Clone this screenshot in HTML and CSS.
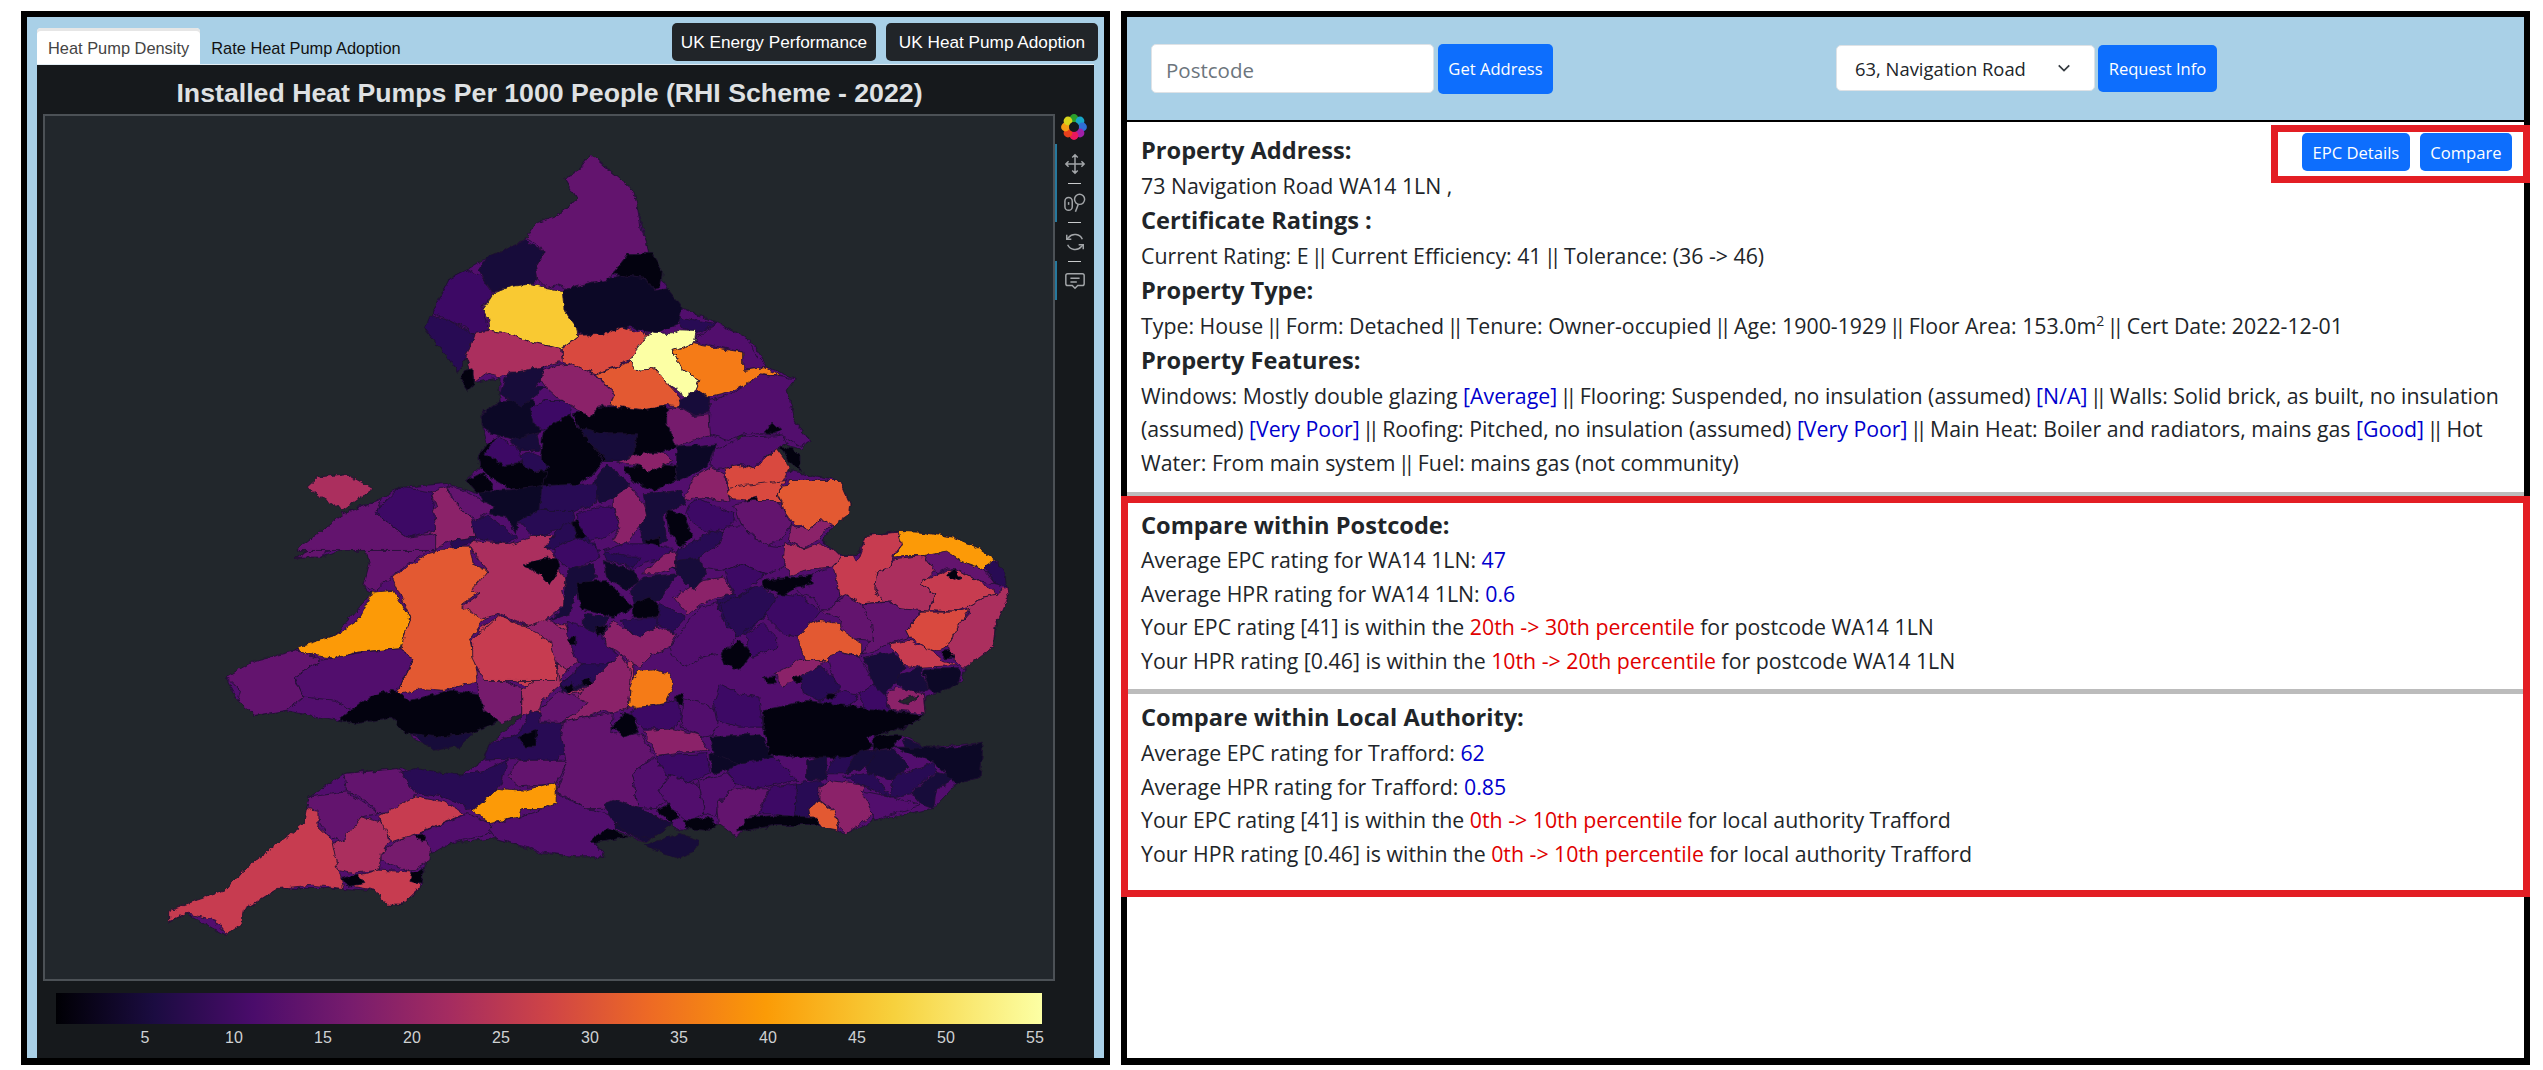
FILE: index.html
```html
<!DOCTYPE html>
<html>

<head>
  <meta name="viewport" content="width=device-width, initial-scale=1.0">
  <title>UK Heat Pump Dashboard</title>
  <link rel="stylesheet" href="styles.css">
</head>

<body>
  <div id="mapFrame">
    <div class="tabBar">
      <div class="tab active">Heat Pump Density</div>
      <div class="tab">Rate Heat Pump Adoption</div>
      <div class="tabButtons">
        <button class="darkBtn energy" type="button">UK Energy Performance</button>
        <button class="darkBtn adopt" type="button">UK Heat Pump Adoption</button>
      </div>
    </div>
    <div id="chart">
      <div class="chartTitle">Installed Heat Pumps Per 1000 People (RHI Scheme - 2022)</div>
      <div class="plotRow">
        <div class="plot">
          <svg class="mapSvg" viewBox="45 116 1008 862">
            <defs>
              <filter id="rough" x="0" y="0" width="100%" height="100%" color-interpolation-filters="sRGB">
                <feTurbulence type="fractalNoise" baseFrequency="0.14" numOctaves="3" seed="4" result="n"/>
                <feDisplacementMap in="SourceGraphic" in2="n" scale="6" xChannelSelector="R" yChannelSelector="G"/>
              </filter>
            </defs>
            <g filter="url(#rough)">
              <!-- coastline underlay so gaps between districts stay purple -->
              <polygon class="c5" points="591,154 618,177 638,207 649,254 668,290 682,307 718,323 750,340 768,367 796,378 787,390 796,423 810,440 800,448 733,433 745,445 790,470 840,480 850,503 848,515 833,525 822,540 840,554 857,555 867,535 898,531 953,537 997,560 1007,587 1008,597 995,627 993,647 965,667 962,680 937,693 925,697 923,710 923,715 907,727 873,735 902,735 927,747 983,742 980,777 957,783 933,808 873,820 847,833 820,825 773,825 737,832 717,823 680,830 672,825 674,823 645,842 616,830 593,840 605,857 542,853 496,838 450,843 427,853 421,887 401,905 375,890 344,888 278,888 243,910 226,935 186,913 169,922 169,910 226,890 304,823 309,797 344,773 398,768 461,775 484,760 490,743 530,710 505,718 467,733 438,750 413,737 393,717 338,720 286,710 255,715 238,700 226,677 298,648 335,635 372,592 364,587 370,563 364,542 321,557 295,557 329,540 298,550 343,513 380,498 400,487 446,483 478,493 467,480 480,467 478,457 487,443 483,427 483,413 500,400 500,377 475,382 466,357 457,372 445,353 425,328 432,313 450,278 468,269 488,257 507,248 527,238 557,215 577,200 564,178 580,168"/>

              <!-- wales and south west -->
              <g transform="translate(140 520) scale(.574 .333)">
                <polygon class="c6" points="270,110 330,60 400,60 420,0 520,0 510,60 500,90 440,165 410,210 390,195 400,130 390,65 340,80 315,110"/>
                <polygon class="c14" points="275,380 340,345 380,300 405,215 440,210 470,290 455,385 380,395 345,415 280,400"/>
                <polygon class="c12" points="440,170 500,100 540,80 575,80 580,130 605,150 590,215 560,255 600,295 575,360 590,480 530,510 490,505 445,525 475,420 455,385 470,290"/>
                <polygon class="c6" points="150,470 200,420 275,390 315,420 270,470 285,530 255,570 200,585 170,540 175,510"/>
                <polygon class="c5" points="270,470 315,420 390,395 455,385 475,420 445,525 400,535 370,570 340,540 285,530"/>
                <polygon class="c0" points="345,600 400,530 440,510 470,540 540,510 590,520 600,570 635,595 610,615 570,640 520,660 460,640 440,590 380,610"/>
                <polygon class="c2" points="475,640 520,650 580,640 555,680 510,690"/>
                <polygon class="c10" points="580,410 590,330 625,285 660,310 720,330 725,430 680,505 620,450"/>
                <polygon class="c7" points="585,450 620,470 665,505 665,580 630,610 600,570 590,520"/>
                <polygon class="c9" points="665,590 665,510 725,430 735,490 700,540 695,570"/>
                <polygon class="c9" points="720,330 675,310 740,310 760,420 730,480"/>
                <polygon class="c9" points="690,575 720,530 770,505 810,470 860,410 860,520 840,570 790,570 745,600"/>
                <polygon class="c7" points="700,560 730,530 780,510 760,560 720,600"/>
                <polygon class="c2" points="730,490 770,440 830,420 815,470 770,500 740,520"/>
                <polygon class="c13" points="855,540 865,460 900,445 930,490 915,555 860,565"/>
                <polygon class="c3" points="600,720 610,670 660,640 680,570 740,610 745,690 720,730 650,715"/>
                <polygon class="c0" points="660,650 690,630 690,680 670,680"/>
                <polygon class="c6" points="640,770 660,720 745,720 725,790 660,800"/>
                <polygon class="c3" points="430,770 480,745 560,765 600,750 640,720 630,790 610,830 580,870 530,830 480,820"/>
                <polygon class="c6" points="355,760 450,745 480,820 470,875 415,880 400,850 360,810"/>
                <polygon class="c6" points="295,830 360,815 400,860 415,880 385,890 355,970 325,940 310,900 290,870"/>
                <polygon class="c10" points="50,1170 100,1140 150,1110 180,1050 240,970 285,910 290,865 310,870 310,920 335,960 345,1040 355,1105 300,1095 240,1105 180,1170 175,1215 150,1245 130,1200 80,1180 50,1205"/>
                <polygon class="c9" points="335,970 355,960 385,890 430,910 435,965 420,1010 415,1050 370,1060 345,1050"/>
                <polygon class="c7" points="420,1000 470,940 510,960 505,1020 470,1055 420,1020"/>
                <polygon class="c10" points="415,890 480,830 530,845 565,880 490,935 440,965"/>
                <polygon class="c10" points="370,1070 415,1050 470,1055 490,1100 455,1155 430,1155 410,1110 375,1100"/>
                <polygon class="c0" points="350,1075 380,1065 390,1090 360,1100"/>
                <polygon class="c0" points="475,1060 495,1040 490,1090 470,1080"/>
                <polygon class="c0" points="480,945 500,935 505,960 490,965"/>
                <polygon class="c5" points="490,935 570,880 610,910 620,935 540,970 510,1000"/>
                <polygon class="c5" points="610,930 620,910 660,890 705,865 725,815 770,860 830,890 830,925 790,960 810,1010 760,1010 700,995 620,955"/>
                <polygon class="c14" points="580,870 625,805 670,810 725,785 725,850 700,865 665,865 660,890 610,910"/>
                <polygon class="c0" points="785,960 815,925 850,950 790,970"/>
                <polygon class="c2" points="800,845 860,860 930,910 880,965 830,925 830,880"/>
                <polygon class="c2" points="880,975 940,940 975,960 965,995 935,1015"/>
              </g>

              <!-- midlands and north west -->
              <g transform="translate(400 400) scale(.3333)">
                <polygon class="c1" points="250,40 300,0 400,0 400,60 420,90 350,120 280,100 250,80"/>
                <polygon class="c4" points="390,20 430,0 520,0 510,40 430,90 400,70"/>
                <polygon class="c0" points="590,20 800,15 810,90 830,110 830,140 700,180 610,180 540,90 520,40"/>
                <polygon class="c0" points="430,90 510,40 540,90 610,180 580,220 520,260 430,260 420,180"/>
                <polygon class="c2" points="540,80 620,100 710,100 700,180 620,180 570,130"/>
                <polygon class="c2" points="330,120 410,95 420,150 360,150"/>
                <polygon class="c0" points="235,170 260,130 290,110 255,160 280,175 310,195 350,190 370,185 400,215 440,210 430,260 330,265 270,230 240,200"/>
                <polygon class="c4" points="255,160 290,105 330,130 360,150 370,180 350,190 310,195 280,175"/>
                <polygon class="c3" points="360,165 400,155 450,200 400,215 370,190"/>
                <polygon class="c0" points="200,240 250,215 285,265 235,280"/>
                <polygon class="c2" points="590,230 620,190 690,250 650,290 600,310 580,270"/>
                <polygon class="c0" points="670,200 720,195 745,215 790,190 830,195 830,240 760,270 700,245"/>
                <polygon class="c8" points="650,185 730,155 790,155 815,180 745,215 720,195"/>
                <polygon class="c1" points="830,140 950,130 920,200 860,230 830,240 830,195"/>
                <polygon class="c5" points="945,150 1030,110 1150,105 1160,130 1090,170 1060,205 1030,190 950,205 930,190"/>
                <polygon class="c11" points="975,200 1030,195 1060,205 1130,145 1170,200 1140,260 1140,310 1080,290 990,295"/>
                <polygon class="c0" points="1140,140 1180,145 1200,165 1200,210 1165,180"/>
                <polygon class="c8" points="850,300 880,230 935,200 975,225 990,305 930,295 880,290"/>
                <polygon class="c1" points="235,275 280,270 330,268 430,255 430,330 355,360 350,400 320,350 270,340"/>
                <polygon class="c3" points="425,255 590,250 590,310 530,330 470,360 420,330"/>
                <polygon class="c3" points="355,360 420,330 520,330 525,360 470,390 400,410"/>
                <polygon class="c8" points="95,275 140,255 150,290 215,355 225,410 150,420 105,445 80,345 110,320"/>
                <polygon class="c6" points="140,255 190,270 285,320 230,360 205,345 160,300"/>
                <polygon class="c3" points="215,365 265,345 310,380 350,410 320,430 225,410"/>
                <polygon class="c3" points="150,420 225,410 200,435 160,445"/>
                <polygon class="c9" points="210,440 215,420 330,430 400,405 460,405 440,440 470,470 480,510 505,545 485,570 495,610 450,650 400,680 350,660 300,640 245,655 185,620 240,580 215,570 265,510 240,480"/>
                <polygon class="c0" points="370,495 430,475 470,470 480,500 450,550 420,520"/>
                <polygon class="c10" points="215,720 300,645 350,670 430,690 470,760 470,840 250,840 215,770"/>
                <polygon class="c8" points="375,680 440,655 500,690 535,780 500,810 470,790 450,720"/>
                <polygon class="c3" points="435,440 490,370 520,370 560,410 600,450 560,440 470,445"/>
                <polygon class="c4" points="530,340 590,320 640,320 660,380 620,410 570,420 530,380"/>
                <polygon class="c0" points="515,365 535,360 560,410 530,410"/>
                <polygon class="c8" points="640,290 690,255 730,310 745,350 700,400 670,440 640,420 660,380 640,320"/>
                <polygon class="c4" points="465,440 530,410 590,440 600,470 560,490 510,510 465,470"/>
                <polygon class="c2" points="500,510 580,490 590,530 520,590 510,640 450,660 490,620"/>
                <polygon class="c1" points="610,480 700,510 720,540 680,570 620,530"/>
                <polygon class="c0" points="530,550 620,540 650,570 700,620 640,650 540,620"/>
                <polygon class="c2" points="730,530 830,520 780,600 700,610 690,570"/>
                <polygon class="c0" points="700,610 750,590 780,620 770,650 700,650"/>
                <polygon class="c2" points="550,640 630,650 590,700 550,680"/>
                <polygon class="c3" points="660,660 770,650 775,680 720,710 680,690"/>
                <polygon class="c3" points="780,610 860,650 820,695 770,670"/>
                <polygon class="c4" points="500,665 550,680 600,700 640,750 660,770 620,790 600,800 550,790 530,780 500,700"/>
                <polygon class="c0" points="500,715 530,710 530,735 510,735"/>
                <polygon class="c0" points="585,680 625,670 610,700 590,705"/>
                <polygon class="c8" points="610,700 640,660 680,690 720,710 770,680 830,700 810,740 760,760 720,800 700,790 650,750 620,735"/>
                <polygon class="c8" points="820,590 910,540 970,530 1000,580 950,590 900,610 860,640"/>
                <polygon class="c5" points="810,740 900,620 950,610 1010,710 970,760 900,770 860,800 820,770"/>
                <polygon class="c3" points="950,600 1040,560 1085,570 1130,610 1090,650 1040,700 980,680"/>
                <polygon class="c4" points="1040,700 1090,670 1130,710 1130,740 1060,770 1040,740"/>
                <polygon class="c0" points="960,760 1020,720 1055,760 1020,810 975,790"/>
                <polygon class="c2" points="820,480 905,470 920,520 880,570 840,530 810,490"/>
                <polygon class="c3" points="830,450 940,390 975,400 960,430 905,470 830,480"/>
                <polygon class="c4" points="870,310 900,295 1000,340 1005,360 980,385 920,395 880,370 860,340"/>
                <polygon class="c5" points="980,380 1030,375 1060,410 1110,435 1160,440 1150,500 1100,520 1020,490 975,510 905,500 900,470 960,430"/>
                <polygon class="c4" points="975,510 1020,490 1100,520 1050,560 1010,590 985,550"/>
                <polygon class="c2" points="730,280 840,270 860,310 790,340 800,420 760,440 730,430 720,380 740,350"/>
                <polygon class="c0" points="800,330 850,340 880,410 840,440 810,400"/>
                <polygon class="c0" points="735,420 780,410 785,440 755,450"/>
                <polygon class="c4" points="670,430 740,430 790,440 820,440 800,470 730,490 700,510 640,470 610,450"/>
                <polygon class="c3" points="610,450 680,470 720,470 700,500 620,480"/>
                <polygon class="c8" points="725,520 780,470 825,450 830,500 770,520"/>
              </g>

              <!-- east -->
              <g transform="translate(720 480) scale(.3333)">
                <polygon class="c12" points="175,40 210,0 360,0 390,70 385,105 340,135 305,118 265,150 215,120 190,85 185,60"/>
                <polygon class="c11" points="20,40 30,20 200,0 175,40 185,70 100,60 40,55"/>
                <polygon class="c0" points="75,60 110,50 115,65 95,78"/>
                <polygon class="c6" points="40,75 100,60 160,60 190,85 215,130 185,175 140,195 110,175 60,130"/>
                <polygon class="c8" points="215,130 265,150 305,118 335,130 300,170 255,205 205,180"/>
                <polygon class="c9" points="195,185 255,205 300,190 345,210 365,230 335,260 270,265 210,285 190,240"/>
                <polygon class="c10" points="337,265 365,225 400,225 410,245 440,165 535,155 545,190 515,230 510,260 470,275 465,320 485,365 420,370 395,350 360,345"/>
                <polygon class="c6" points="610,225 680,212 720,240 790,265 825,310 770,300 720,270 680,265 650,280"/>
                <polygon class="c14" points="520,230 545,195 535,153 600,155 700,170 770,200 830,240 790,265 720,240 680,215 610,225 550,225"/>
                <polygon class="c3" points="795,260 825,240 855,280 860,320 825,310"/>
                <polygon class="c9" points="470,275 510,260 520,235 610,225 645,270 620,295 600,310 645,340 625,395 540,385 515,365 485,365 465,320"/>
                <polygon class="c10" points="600,310 620,295 680,270 720,270 770,300 835,340 790,350 740,380 700,395 630,390 645,340"/>
                <polygon class="c0" points="680,285 705,268 725,290 700,300"/>
                <polygon class="c9" points="740,380 790,350 835,340 860,320 865,350 825,440 820,500 760,545 735,560 700,535 680,500 720,430 750,395"/>
                <polygon class="c11" points="560,450 605,395 700,395 750,385 720,430 680,500 630,515 600,490 570,470"/>
                <polygon class="c10" points="505,490 570,480 640,515 670,540 720,555 600,560 550,555 530,520"/>
                <polygon class="c0" points="660,515 690,508 700,530 675,532"/>
                <polygon class="c6" points="415,370 515,365 540,385 605,390 560,450 570,470 505,490 470,510 425,520 460,470 430,420"/>
                <polygon class="c6" points="305,390 380,345 425,370 455,430 460,480 400,475 360,450 365,420"/>
                <polygon class="c12" points="230,460 250,430 300,420 360,430 365,450 425,490 425,530 360,515 320,545 255,545 240,495"/>
                <polygon class="c5" points="225,320 300,270 340,260 360,345 335,385 300,385 280,350 240,340"/>
                <polygon class="c0" points="125,300 210,290 275,285 280,310 230,320 190,345 130,320"/>
                <polygon class="c4" points="130,390 180,340 240,345 300,390 270,430 230,470 190,460 150,420"/>
                <polygon class="c3" points="0,370 60,345 120,315 170,350 130,410 50,470 20,420"/>
                <polygon class="c2" points="430,530 520,515 555,560 530,600 490,650 460,610"/>
                <polygon class="c2" points="530,590 600,560 625,625 580,640 530,610"/>
                <polygon class="c1" points="610,565 725,565 715,610 650,640 625,620"/>
                <polygon class="c8" points="500,650 525,620 610,640 615,700 510,690"/>
                <polygon class="bg" points="535,660 600,645 570,670"/>
                <polygon class="c5" points="325,530 360,515 420,530 460,610 410,645 360,640 340,590"/>
                <polygon class="c3" points="240,585 300,555 340,590 360,625 300,660 250,640"/>
                <polygon class="c4" points="300,660 360,630 410,640 410,660 345,710 295,680"/>
                <polygon class="c4" points="415,640 460,610 500,650 505,695 440,700"/>
                <polygon class="c8" points="165,580 240,540 315,540 300,555 240,590 190,620"/>
                <polygon class="c0" points="320,640 350,640 340,660 320,655"/>
                <polygon class="c0" points="215,590 240,585 245,605 225,605"/>
                <polygon class="c0" points="130,590 165,590 170,610 145,610"/>
              </g>

              <!-- south and south east -->
              <g transform="translate(540 640) scale(.3333)">
                <polygon class="c3" points="60,130 130,70 220,70 210,120 130,130 80,150"/>
                <polygon class="c0" points="70,140 95,130 105,150 85,155"/>
                <polygon class="c0" points="125,120 150,110 160,135 135,135"/>
                <polygon class="c8" points="70,245 130,150 240,40 275,90 265,200 230,215 190,210 130,230"/>
                <polygon class="c6" points="0,205 60,150 140,185 115,210 65,245 0,245"/>
                <polygon class="c13" points="265,200 270,150 290,90 340,85 385,100 405,130 375,190 320,200"/>
                <polygon class="c6" points="70,245 130,230 220,215 215,280 305,280 340,345 275,400 295,500 135,505 50,450 80,370 65,290"/>
                <polygon class="c0" points="215,260 250,215 280,225 295,275 250,290"/>
                <polygon class="c4" points="270,215 300,200 375,190 410,175 425,230 400,265 310,265"/>
                <polygon class="c0" points="405,170 425,160 440,190 420,195"/>
                <polygon class="c5" points="430,175 500,190 540,215 520,285 490,290 420,260"/>
                <polygon class="c8" points="310,270 400,265 480,285 505,330 420,335 350,345"/>
                <polygon class="c4" points="520,190 540,130 600,160 660,170 670,260 600,260 530,240"/>
                <polygon class="c4" points="350,345 500,340 510,400 450,425 385,405 355,380"/>
                <polygon class="c5" points="275,400 340,350 385,405 355,450 380,480 345,505 295,500"/>
                <polygon class="c5" points="355,450 390,405 450,425 480,440 495,520 440,540 380,490"/>
                <polygon class="c5" points="475,420 560,400 590,430 540,480 525,530 495,520"/>
                <polygon class="c6" points="530,495 575,445 685,445 655,520 590,590 535,550"/>
                <polygon class="c4" points="660,520 690,440 770,430 765,530 700,520"/>
                <polygon class="c4" points="560,395 600,360 700,350 770,420 640,445 590,430"/>
                <polygon class="c3" points="770,430 840,420 860,440 830,490 800,530 765,530"/>
                <polygon class="c8" points="840,440 870,420 975,435 965,450 1000,520 950,560 920,580 900,560 880,510 840,480"/>
                <polygon class="c12" points="805,500 840,480 885,520 900,570 850,560 810,530"/>
                <polygon class="c5" points="960,450 1060,470 1140,495 1060,520 1000,540 1000,520"/>
                <polygon class="c3" points="1050,470 1060,410 1180,365 1190,390 1110,460"/>
                <polygon class="c2" points="1115,460 1190,395 1250,410 1190,445 1180,505 1140,490"/>
                <polygon class="c3" points="910,410 1000,395 1050,470 975,435"/>
                <polygon class="c1" points="1060,320 1250,320 1330,305 1320,410 1250,430 1180,365"/>
                <polygon class="c2" points="980,375 1010,330 1060,325 1110,380 1050,420 985,395"/>
                <polygon class="c2" points="920,400 950,330 1010,330 980,380"/>
                <polygon class="c3" points="860,400 900,310 950,320 920,400"/>
                <polygon class="c2" points="800,360 860,345 860,415 800,420"/>
                <polygon class="c1" points="510,340 580,330 600,370 570,385 515,400"/>
                <polygon class="c1" points="510,290 660,280 700,350 590,370 520,340"/>
                <polygon class="c0" points="670,210 800,180 1150,225 1100,260 980,290 1000,320 920,350 850,350 760,350 690,340 670,260"/>
                <polygon class="c0" points="1000,285 1085,285 1060,320 1000,330"/>
                <polygon class="c2" points="1090,295 1160,320 1100,325"/>
                <polygon class="c0" points="590,575 625,530 700,525 830,530 835,555 700,555"/>
                <polygon class="c0" points="350,510 385,490 415,530 395,545"/>
                <polygon class="c0" points="430,540 500,530 530,550 510,570 440,565"/>
                <polygon class="c2" points="190,490 220,480 300,500 395,555 330,595 260,580 220,540"/>
              </g>

              <!-- north -->
              <g transform="translate(250 130) scale(.357 .3333)">
                <polygon class="c9" points="190,1040 270,1030 345,1075 260,1140 190,1095 160,1070"/>
                <polygon class="c6" points="260,1150 370,1105 355,1150 440,1220 520,1210 520,1260 130,1260"/>
                <polygon class="c4" points="360,1130 420,1070 510,1085 520,1200 440,1220 355,1150"/>
                <polygon class="c6" points="955,72 1000,115 1030,140 1075,180 1085,230 1095,290 1110,335 1118,372 1060,370 1015,430 1000,460 960,455 905,480 860,462 830,472 805,445 800,410 825,365 800,340 775,325 800,280 860,255 915,210 880,145 925,115"/>
                <polygon class="c2" points="640,420 665,380 720,355 770,330 825,365 800,410 805,445 790,462 730,470 680,485"/>
                <polygon class="c0" points="1015,430 1060,370 1125,368 1155,420 1150,470 1120,480 1110,445 1040,435"/>
                <polygon class="c1" points="875,480 960,455 1040,435 1110,445 1130,480 1170,475 1210,530 1200,580 1130,610 1060,590 1000,610 960,620 920,610 915,590 880,540"/>
                <polygon class="c3" points="1200,560 1310,580 1250,610 1210,590"/>
                <polygon class="c5" points="1250,620 1310,580 1390,620 1420,680 1450,710 1380,720 1380,665 1320,650 1245,635"/>
                <polygon class="c4" points="510,550 560,445 610,418 650,440 680,490 650,530 668,600 630,615 600,590 540,560"/>
                <polygon class="c3" points="490,595 505,555 560,570 630,615 605,680 580,725 545,670"/>
                <polygon class="c15" points="650,540 680,490 730,468 790,460 830,472 875,480 880,540 915,590 918,615 870,655 790,635 730,610 672,600 668,560"/>
                <polygon class="c9" points="630,605 672,600 730,610 790,635 870,655 875,695 830,708 780,725 725,725 700,740 660,730 630,755 605,680"/>
                <polygon class="c0" points="590,745 600,720 625,715 625,765 610,780"/>
                <polygon class="c11" points="875,655 918,615 1000,610 1040,590 1120,615 1065,690 970,730 875,695"/>
                <polygon class="c16" points="1060,690 1110,620 1130,605 1180,610 1200,598 1250,600 1245,635 1215,650 1185,660 1210,715 1260,750 1250,775 1220,800 1165,755 1135,715 1085,720"/>
                <polygon class="c13" points="1185,660 1215,650 1240,640 1320,655 1380,665 1380,720 1440,712 1495,740 1440,730 1400,760 1320,790 1280,800 1250,775 1260,750 1210,715"/>
                <polygon class="c12" points="970,730 1065,695 1085,720 1135,715 1165,755 1205,800 1200,830 1170,825 1100,838 1010,825 1020,790"/>
                <polygon class="c8" points="805,730 860,705 905,700 970,735 1020,790 1010,825 975,830 955,860 900,825 860,800 830,770"/>
                <polygon class="c2" points="1200,810 1250,780 1290,800 1285,845 1240,852 1205,830"/>
                <polygon class="c5" points="1290,810 1350,790 1430,730 1530,745 1505,780 1530,880 1568,930 1540,945 1500,920 1470,910 1380,910 1340,930 1285,910"/>
                <polygon class="c7" points="1170,835 1200,830 1240,855 1285,850 1290,915 1240,930 1195,950 1170,880"/>
                <polygon class="c0" points="1440,905 1465,875 1490,900 1465,910"/>
                <polygon class="c2" points="720,730 830,708 800,770 830,770 760,830 700,790"/>
              </g>
            </g>
          </svg>
        </div>
        <div class="toolbar">
          <svg class="toolLogo" viewBox="0 0 28 28">
            <circle cx="14" cy="5.5" r="4.4" fill="#2ca02c"/>
            <circle cx="20" cy="8" r="4.4" fill="#17a6c9"/>
            <circle cx="22.5" cy="14" r="4.4" fill="#2f6fd6"/>
            <circle cx="20" cy="20" r="4.4" fill="#a020a8"/>
            <circle cx="14" cy="22.5" r="4.4" fill="#e8175d"/>
            <circle cx="8" cy="20" r="4.4" fill="#e8401c"/>
            <circle cx="5.5" cy="14" r="4.4" fill="#f59c14"/>
            <circle cx="8" cy="8" r="4.4" fill="#d7d41c"/>
            <circle cx="14" cy="14" r="5" fill="#16191c"/>
          </svg>
          <div class="tool active">
            <svg viewBox="0 0 24 24" fill="none"><path d="M12 2v20M2 12h20M9 5l3-3 3 3M9 19l3 3 3-3M5 9l-3 3 3 3M19 9l3 3-3 3"/></svg>
          </div>
          <div class="tool active">
            <svg viewBox="0 0 24 24" fill="none"><rect x="1" y="6" width="8" height="14" rx="4"/><path d="M5 11v3"/><circle cx="17" cy="8" r="5.5"/><path d="M15.5 13.5l-3 8"/></svg>
          </div>
          <div class="tool">
            <svg viewBox="0 0 24 24" fill="none"><path d="M20 9a9 9 0 0 0-15-2l-2 2M4 15a9 9 0 0 0 15 2l2-2"/><path d="M3 4v5h5M21 20v-5h-5"/></svg>
          </div>
          <div class="tool active last">
            <svg viewBox="0 0 24 24" fill="none"><path d="M4 4h16a2 2 0 0 1 2 2v9a2 2 0 0 1-2 2h-5l-3 3-3-3H4a2 2 0 0 1-2-2V6a2 2 0 0 1 2-2z"/><path d="M7 9h10M7 13h7"/></svg>
          </div>
        </div>
      </div>
      <div class="colorBar"></div>
      <div class="ticks">
        <span>5</span><span>10</span><span>15</span><span>20</span><span>25</span><span>30</span><span>35</span><span>40</span><span>45</span><span>50</span><span>55</span>
      </div>
    </div>
  </div>

  <div id="infoFrame">
    <div class="searchBar">
      <div class="postcodeGroup">
        <input class="postcodeInput" type="text" placeholder="Postcode">
        <button class="blueBtn tall" type="button">Get Address</button>
      </div>
      <div class="addressGroup">
        <div class="addressSelect">63, Navigation Road
          <svg class="chevron" viewBox="0 0 16 16" fill="none"><path d="M2 5l6 6 6-6"/></svg>
        </div>
        <button class="blueBtn" type="button">Request Info</button>
      </div>
    </div>

    <div class="details">
      <div class="detailButtons">
        <button class="blueBtn small" type="button">EPC Details</button>
        <button class="blueBtn small" type="button">Compare</button>
      </div>
      <h4>Property Address:</h4>
      <p>73 Navigation Road WA14 1LN ,</p>
      <h4>Certificate Ratings :</h4>
      <p>Current Rating: E <span class="sep">||</span> Current Efficiency: 41 <span class="sep">||</span> Tolerance: (36 -&gt; 46)</p>
      <h4>Property Type:</h4>
      <p>Type: House <span class="sep">||</span> Form: Detached <span class="sep">||</span> Tenure: Owner-occupied <span class="sep">||</span> Age: 1900-1929 <span class="sep">||</span> Floor Area: 153.0m<sup>2</sup> <span class="sep">||</span> Cert Date: 2022-12-01</p>
      <h4>Property Features:</h4>
      <p>Windows: Mostly double glazing <span class="blue">[Average]</span> <span class="sep">||</span> Flooring: Suspended, no insulation (assumed) <span class="blue">[N/A]</span> <span class="sep">||</span> Walls: Solid brick, as built, no insulation (assumed) <span class="blue">[Very Poor]</span> <span class="sep">||</span> Roofing: Pitched, no insulation (assumed) <span class="blue">[Very Poor]</span> <span class="sep">||</span> Main Heat: Boiler and radiators, mains gas <span class="blue">[Good]</span> <span class="sep">||</span> Hot Water: From main system <span class="sep">||</span> Fuel: mains gas (not community)</p>
    </div>
    <div class="divider"></div>

    <div class="compareBox">
      <div class="compareSection first">
        <h4>Compare within Postcode:</h4>
        <p>Average EPC rating for WA14 1LN: <span class="blue">47</span></p>
        <p>Average HPR rating for WA14 1LN: <span class="blue">0.6</span></p>
        <p>Your EPC rating [41] is within the <span class="red">20th -&gt; 30th percentile</span> for postcode WA14 1LN</p>
        <p>Your HPR rating [0.46] is within the <span class="red">10th -&gt; 20th percentile</span> for postcode WA14 1LN</p>
      </div>
      <div class="divider"></div>
      <div class="compareSection">
        <h4>Compare within Local Authority:</h4>
        <p>Average EPC rating for Trafford: <span class="blue">62</span></p>
        <p>Average HPR rating for Trafford: <span class="blue">0.85</span></p>
        <p>Your EPC rating [41] is within the <span class="red">0th -&gt; 10th percentile</span> for local authority Trafford</p>
        <p>Your HPR rating [0.46] is within the <span class="red">0th -&gt; 10th percentile</span> for local authority Trafford</p>
      </div>
    </div>
  </div>
</body>

</html>
```
FILE: styles.css
```css
html,
body {
  margin: 0;
  padding: 0;
  height: 100%;
  background-color: #fff;
  overflow: hidden;
}

body {
  display: flex;
  gap: 11px;
  padding: 11px 13px 5px 21px;
  box-sizing: border-box;
  font-family: "Open Sans", sans-serif;
  color: #212529;
}

/* left panel */
#mapFrame {
  width: 1089px;
  flex: none;
  box-sizing: border-box;
  border: 6px solid #000;
  border-bottom-width: 7px;
  background-color: #a9d0e7;
  padding: 0 10px 0 10px;
  display: flex;
  flex-direction: column;
  font-family: "Liberation Sans", sans-serif;
}

.tabBar {
  display: flex;
  align-items: flex-end;
  height: 47px;
  border-bottom: 1px solid #e4eef4;
  flex: none;
}

.tab {
  padding: 0 11px;
  height: 36px;
  line-height: 40px;
  font-size: 16.4px;
  color: #111;
  border-radius: 4px 4px 0 0;
}

.tab.active {
  background-color: #fff;
  color: #444;
  box-shadow: inset 0 3px 0 #e6e6e6;
}

.tabButtons {
  margin-left: auto;
  margin-right: -4px;
  align-self: flex-start;
  display: flex;
  gap: 10px;
  margin-top: 6px;
}

.darkBtn {
  height: 38px;
  padding: 0;
  border: none;
  border-radius: 5px;
  background-color: #212529;
  color: #fff;
  font-family: "Liberation Sans", sans-serif;
  font-size: 17.2px;
}

.darkBtn.energy {
  width: 204px;
}

.darkBtn.adopt {
  width: 212px;
}

#chart {
  flex: 1;
  background-color: #16191c;
  display: flex;
  flex-direction: column;
  min-height: 0;
}

.chartTitle {
  height: 49px;
  line-height: 56px;
  text-align: center;
  font-size: 26.7px;
  font-weight: bold;
  color: #dfe1e3;
  padding-right: 32px;
}

.plotRow {
  display: flex;
  height: 867px;
  padding-left: 6px;
}

.plot {
  width: 1012px;
  box-sizing: border-box;
  border: 2px solid #4c5156;
  background-color: #22272c;
}

.mapSvg {
  display: block;
  width: 1008px;
  height: 863px;
}

.mapSvg polygon {
  stroke: #1d1030;
  stroke-width: 0.8;
  vector-effect: non-scaling-stroke;
}

.bg { fill: #22272c; }
.c0 { fill: #03020f; }
.c1 { fill: #0c0826; }
.c2 { fill: #170c3a; }
.c3 { fill: #280b54; }
.c4 { fill: #3d0965; }
.c5 { fill: #520e6d; }
.c6 { fill: #63146e; }
.c7 { fill: #761b6d; }
.c8 { fill: #8b2269; }
.c9 { fill: #ab2f5e; }
.c10 { fill: #c73c50; }
.c11 { fill: #d9493f; }
.c12 { fill: #e35932; }
.c13 { fill: #f57b17; }
.c14 { fill: #fc9a07; }
.c15 { fill: #f9c932; }
.c16 { fill: #fcffa4; }

/* bokeh style toolbar */
.toolbar {
  width: 38px;
  flex: none;
  display: flex;
  flex-direction: column;
}

.toolLogo {
  width: 28px;
  height: 28px;
  margin: -1px 0 3px 5px;
  flex: none;
}

.tool {
  height: 39px;
  box-sizing: border-box;
  border-left: 2px solid transparent;
  position: relative;
  display: flex;
  align-items: center;
  justify-content: center;
  flex: none;
}

.tool.active {
  border-left-color: #26799e;
}

.tool svg {
  width: 22px;
  height: 24px;
  stroke: #a3a6a9;
  stroke-width: 1.6;
}

.tool::after {
  content: "";
  position: absolute;
  left: 11px;
  bottom: -1px;
  width: 13px;
  height: 1px;
  background-color: #c8cacc;
}

.tool.last::after {
  display: none;
}

.colorBar {
  margin: 12px 0 0 19px;
  width: 986px;
  height: 31px;
  flex: none;
  background: linear-gradient(to right, #000004, #1b0c41 10%, #4a0c6b 20%, #781c6d 30%, #a52c60 40%, #cf4446 50%, #ed6925 60%, #fb9b06 72%, #f7d13d 85%, #fcffa4);
}

.ticks {
  display: flex;
  margin: 5px 0 0 63.5px;
  flex: none;
}

.ticks span {
  width: 89px;
  flex: none;
  text-align: center;
  font-size: 16px;
  line-height: 18px;
  color: #cfd1d3;
}

/* right panel */
#infoFrame {
  width: 1409px;
  flex: none;
  box-sizing: border-box;
  border: 6px solid #000;
  border-bottom-width: 7px;
  position: relative;
  background-color: #fff;
}

.searchBar {
  height: 103px;
  border-bottom: 2px solid #000;
  background-color: #a9d0e7;
  display: flex;
  align-items: center;
  padding-left: 24px;
}

.postcodeGroup {
  width: 685px;
  flex: none;
  display: flex;
  gap: 4px;
}

.addressGroup {
  display: flex;
  gap: 3px;
}

.postcodeInput {
  width: 283px;
  height: 49px;
  box-sizing: border-box;
  border: 1px solid #dee2e6;
  border-radius: 5px;
  padding: 3px 14px 0;
  font-family: "Open Sans", sans-serif;
  font-size: 20.5px;
}

.postcodeInput::placeholder {
  color: #6c757d;
}

.addressSelect {
  width: 259px;
  height: 46px;
  box-sizing: border-box;
  border: 1px solid #dee2e6;
  border-radius: 5px;
  background-color: #fff;
  padding: 0 13px 0 18px;
  display: flex;
  align-items: center;
  justify-content: space-between;
  font-size: 18.4px;
}

.chevron {
  width: 14px;
  height: 14px;
  margin-right: 10px;
  stroke: #343a40;
  stroke-width: 2;
}

.blueBtn {
  border: none;
  border-radius: 5px;
  background-color: #0d6efd;
  color: #fff;
  font-family: "Open Sans", sans-serif;
  font-size: 16.6px;
  width: 119px;
  height: 47px;
  padding: 0;
}

.blueBtn.tall {
  width: 115px;
  height: 50px;
}

.detailButtons {
  position: absolute;
  top: 108px;
  right: -6px;
  width: 259px;
  height: 58px;
  box-sizing: border-box;
  border: 7px solid #e31e24;
  padding: 1px 11px 0 24px;
  display: flex;
  gap: 10px;
  background-color: transparent;
}

.blueBtn.small {
  width: auto;
  flex: auto;
  height: 38px;
}

.details {
  padding: 10px 14px 12px;
}

h4 {
  margin: 0;
  font-size: 23.6px;
  line-height: 36.5px;
  font-weight: 700;
}

p {
  margin: 0;
  font-size: 21.3px;
  line-height: 33.6px;
}

sup {
  font-size: 14px;
  line-height: 0;
}

.sep {
  letter-spacing: -6px;
  margin: 0 3px 0 -3px;
}

.blue {
  color: #0000cd;
}

.red {
  color: #e00000;
}

.divider {
  height: 5px;
  background-color: #bcbcbc;
}

.compareBox {
  margin: -1px -6px 0;
  box-sizing: border-box;
  height: 401px;
  border: 7px solid #e31e24;
  position: relative;
}

.compareSection {
  padding: 5px 13px 0;
}

.compareSection.first {
  padding: 4px 13px 12px;
}
```
